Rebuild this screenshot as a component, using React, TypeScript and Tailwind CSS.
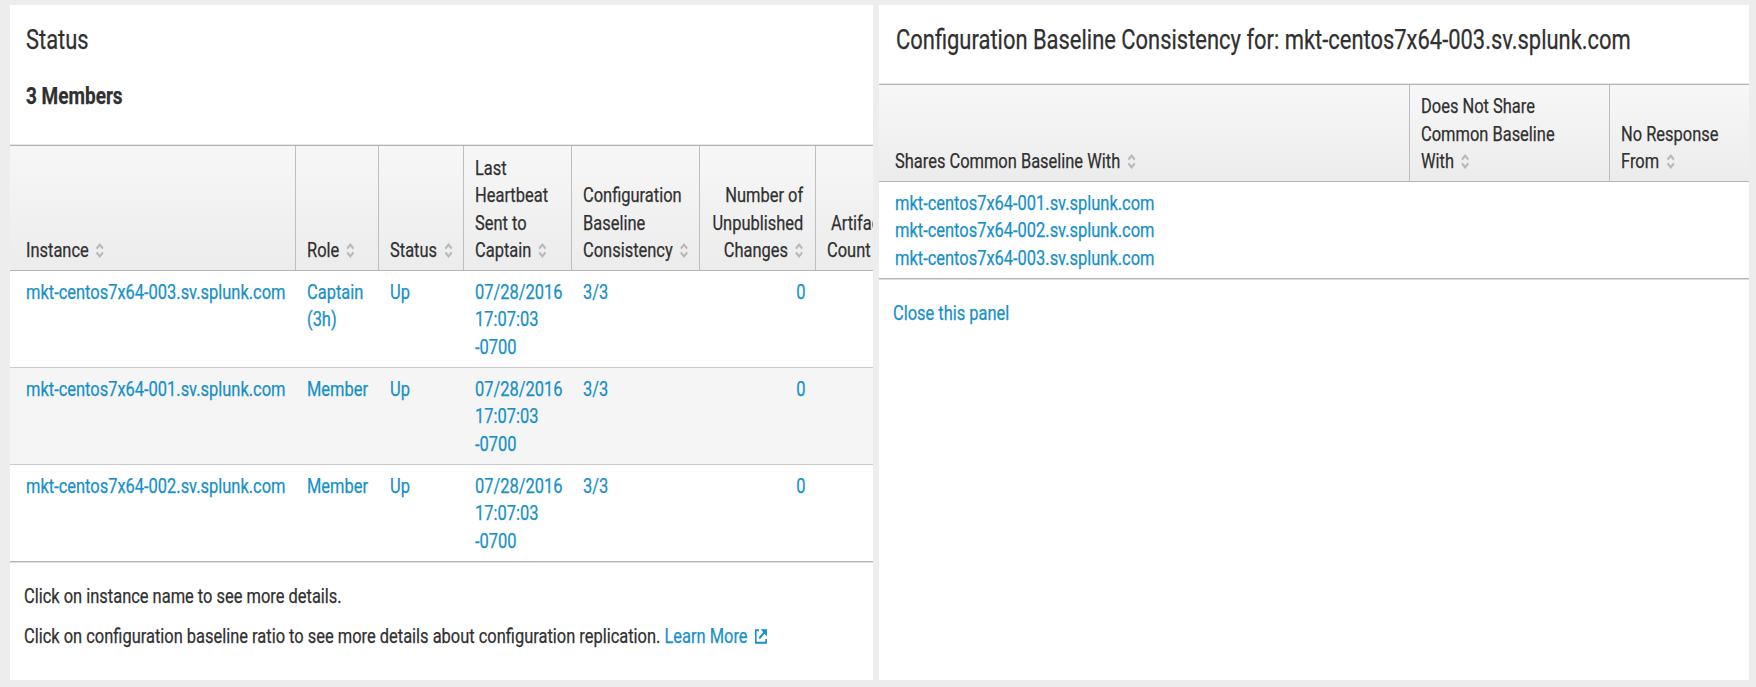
import type { ReactNode } from "react";

/** One or more unwrapped lines of narrowed Roboto. */
function Text({ children, right = false, className = "" }: { children: ReactNode; right?: boolean; className?: string }) {
  return (
    <div className={`w-max whitespace-nowrap scale-x-[0.802] ${right ? "origin-right self-end text-right" : "origin-left self-start"} ${className}`}>
      {children}
    </div>
  );
}

function SortIcon() {
  return (
    <svg className="ml-[9px] inline-block h-[15px] w-[10px] align-[-1px]" viewBox="0 0 10 15" fill="none" stroke="#b8b8b8" strokeWidth="2.3">
      <path d="M1 5.6 5 1.6l4 4M1 9.4l4 4 4-4" />
    </svg>
  );
}

function ExternalIcon() {
  return (
    <svg className="ml-[9px] inline-block h-[15px] w-[16px] align-[-1px]" viewBox="0 0 16 15" fill="none" stroke="currentColor" strokeWidth="2.1">
      <path d="M5.4 1.2H1.4v12.6h13V10" />
      <path d="M5.8 9.4 13 2.6" strokeWidth="2.4" />
      <path d="M7.6 .2h7.9v7.4z" fill="currentColor" stroke="none" />
    </svg>
  );
}

function HeadCell({ lines, right = false, first = false, last = false }: {
  lines: string[]; right?: boolean; first?: boolean; last?: boolean;
}) {
  return (
    <div className={`flex min-w-0 flex-col justify-end pb-[6px] ${first ? "pl-[16px]" : "pl-[11px]"} ${right ? "pr-[11.5px]" : ""} ${last ? "" : "border-r border-[#bebebe]"}`}>
      <Text right={right}>
        {lines.map((line, i) => (
          <div key={line}>
            {line}
            {i === lines.length - 1 && <SortIcon />}
          </div>
        ))}
      </Text>
    </div>
  );
}

function Cell({ lines, right = false, first = false }: { lines: string[]; right?: boolean; first?: boolean }) {
  return (
    <div className={`flex min-w-0 flex-col pt-[8px] text-[#1790c7] ${first ? "pl-[16px]" : "pl-[11px]"} ${right ? "pr-[10.5px]" : ""}`}>
      <Text right={right}>
        {lines.map((line) => (
          <div key={line}>{line}</div>
        ))}
      </Text>
    </div>
  );
}

const members = [
  { name: "mkt-centos7x64-003.sv.splunk.com", role: ["Captain", "(3h)"] },
  { name: "mkt-centos7x64-001.sv.splunk.com", role: ["Member"] },
  { name: "mkt-centos7x64-002.sv.splunk.com", role: ["Member"] },
];

const rowStyles = [
  "h-[97px] border-[#cacaca]",
  "h-[97px] border-[#cacaca] bg-[#f5f5f5]",
  "h-[97px] border-[#b4b4b4] shadow-[0_1px_0_#dedede]",
];

export default function App() {
  return (
    <div className="flex h-[687px] w-[1756px] gap-[6px] overflow-hidden bg-[#ededed] pt-[5px] pr-[7px] pb-[7px] pl-[10px] font-['Roboto',sans-serif] text-[20.5px] leading-[27.25px] text-[#303030] [-webkit-text-stroke:0.25px_currentColor]">
      <section className="flex w-[863px] shrink-0 flex-col overflow-hidden bg-white">
        <Text className="mt-[16px] ml-[15.5px] text-[27.3px] leading-[38px]">Status</Text>
        <Text className="mt-[22px] ml-[15.5px] text-[23.7px] leading-[30px] font-bold">3 Members</Text>
        <div className="mt-[34px]">
          <div className="grid h-[126px] grid-cols-[286px_83px_85px_108px_128px_116px_57px] border-t border-b border-[#b4b4b4] bg-linear-to-b from-[#f7f7f7] to-[#ececec] shadow-[0_-1px_0_#e6e6e6]">
            <HeadCell first lines={["Instance"]} />
            <HeadCell lines={["Role"]} />
            <HeadCell lines={["Status"]} />
            <HeadCell lines={["Last", "Heartbeat", "Sent to", "Captain"]} />
            <HeadCell lines={["Configuration", "Baseline", "Consistency"]} />
            <HeadCell right lines={["Number of", "Unpublished", "Changes"]} />
            <div className="flex flex-col justify-end pb-[6px] pl-[10.5px]">
              <Text>
                <div className="pl-[5px]">Artifact</div>
                <div>Count</div>
              </Text>
            </div>
          </div>
          {members.map((m, i) => (
            <div key={m.name} className={`grid grid-cols-[286px_83px_85px_108px_128px_116px_57px] border-b ${rowStyles[i]}`}>
              <Cell first lines={[m.name]} />
              <Cell lines={m.role} />
              <Cell lines={["Up"]} />
              <Cell lines={["07/28/2016", "17:07:03", "-0700"]} />
              <Cell lines={["3/3"]} />
              <Cell right lines={["0"]} />
            </div>
          ))}
        </div>
        <Text className="mt-[20.5px] ml-[13.5px]">Click on instance name to see more details.</Text>
        <Text className="mt-[13.5px] ml-[13.5px]">
          Click on configuration baseline ratio to see more details about configuration replication.{" "}
          <a className="text-[#1790c7]">
            Learn More
            <ExternalIcon />
          </a>
        </Text>
      </section>

      <section className="flex min-w-0 flex-1 flex-col overflow-hidden bg-white">
        <Text className="mt-[16px] ml-[16.5px] text-[27.35px] leading-[38px]">
          Configuration Baseline Consistency for: mkt-centos7x64-003.sv.splunk.com
        </Text>
        <div className="mt-[25px]">
          <div className="grid h-[98px] grid-cols-[531px_200px_139px] border-t border-b border-[#b4b4b4] bg-linear-to-b from-[#f7f7f7] to-[#ececec] shadow-[0_-1px_0_#e6e6e6]">
            <HeadCell first lines={["Shares Common Baseline With"]} />
            <HeadCell lines={["Does Not Share", "Common Baseline", "With"]} />
            <HeadCell last lines={["No Response", "From"]} />
          </div>
          <div className="grid h-[97px] grid-cols-[531px_200px_139px] border-b border-[#b4b4b4] shadow-[0_1px_0_#dedede]">
            <Cell first lines={["mkt-centos7x64-001.sv.splunk.com", "mkt-centos7x64-002.sv.splunk.com", "mkt-centos7x64-003.sv.splunk.com"]} />
          </div>
        </div>
        <Text className="mt-[20.5px] ml-[14px] text-[#1790c7]">Close this panel</Text>
      </section>
    </div>
  );
}
